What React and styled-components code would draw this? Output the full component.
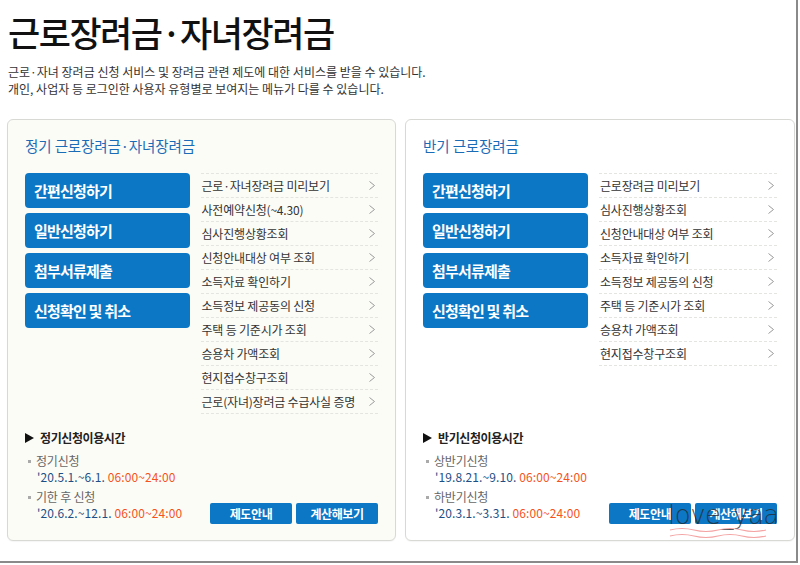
import React from 'react'
import styled, { createGlobalStyle } from 'styled-components'

const GlobalStyle = createGlobalStyle`
  body {
    margin: 0;
    background: #fff;
    font-family: "Noto Sans CJK KR", "Noto Sans", sans-serif;
    color: #333;
  }
  * { box-sizing: border-box; }
`

const Frame = styled.div`
  position: relative;
  width: 798px;
  height: 563px;
  padding: 0 4px 0 7px;
  border-right: 2px solid #8a8a8a;
  border-bottom: 2px solid #8a8a8a;
  overflow: hidden;
`

const Title = styled.h1`
  margin: 0;
  padding: 10px 0 0 1px;
  font-size: 35px;
  font-weight: 500;
  line-height: 44px;
  letter-spacing: -1.5px;
  color: #111;
`

const Desc = styled.p`
  margin: 9px 0 0 1px;
  font-size: 12px;
  line-height: 17px;
  letter-spacing: 0;
  color: #333;
`

const Panels = styled.div`
  display: flex;
  gap: 9px;
  margin-top: 22px;
`

const Panel = styled.section`
  width: ${p => p.$w}px;
  height: 422px;
  border: 1px solid #d8d8d4;
  border-radius: 6px;
  background: ${p => p.$bg};
  padding: 16px 17px 16px 17px;
  display: flex;
  flex-direction: column;
  box-shadow: 0 1px 1px rgba(0,0,0,0.04);
`

const PanelTitle = styled.h2`
  margin: 0;
  font-size: 14.5px;
  font-weight: 400;
  line-height: 20px;
  letter-spacing: -0.1px;
  color: #1b6cb6;
`

const Body = styled.div`
  display: flex;
  gap: 11px;
  margin-top: 17px;
`

const BigButtons = styled.div`
  display: flex;
  flex-direction: column;
  gap: 5px;
  width: 165px;
`

const BigButton = styled.a`
  display: flex;
  align-items: center;
  height: 35px;
  padding-left: 9px;
  border-radius: 4px;
  background: #0b77c5;
  color: #fff;
  font-size: 15px;
  font-weight: 700;
  letter-spacing: -0.8px;
`

const Menu = styled.ul`
  list-style: none;
  margin: 0;
  padding: 0;
  width: 178px;
  border-top: 1px dashed #e4e4e0;
`

const MenuItem = styled.li`
  display: flex;
  align-items: center;
  justify-content: space-between;
  height: 24px;
  padding: 0 3px 0 1px;
  border-bottom: 1px dashed #e4e4e0;
  font-size: 12px;
  letter-spacing: -0.2px;
  color: #333;
  white-space: nowrap;
`

const Chevron = () => (
  <svg width="6" height="9" viewBox="0 0 6 9">
    <polyline points="0.5,0.5 5.5,4.5 0.5,8.5" fill="none" stroke="#9a9a9a" strokeWidth="1" />
  </svg>
)

const Info = styled.div`
  margin-top: auto;
  display: flex;
  justify-content: space-between;
  align-items: flex-end;
`

const InfoText = styled.div`
  display: flex;
  flex-direction: column;
  margin-bottom: 3px;
`

const InfoHead = styled.div`
  display: flex;
  align-items: center;
  gap: 6px;
  font-size: 12px;
  font-weight: 700;
  letter-spacing: -0.4px;
  color: #222;
  margin-bottom: 7px;
`

const Tri = styled.span`
  width: 0;
  height: 0;
  border-top: 5px solid transparent;
  border-bottom: 5px solid transparent;
  border-left: 9px solid #111;
`

const Label = styled.div`
  display: flex;
  align-items: center;
  gap: 5px;
  padding-left: 3px;
  margin-top: ${p => (p.$first ? 0 : 4)}px;
  font-size: 12px;
  line-height: 16px;
  letter-spacing: -0.2px;
  color: #666;
  &::before {
    content: '';
    width: 3px;
    height: 3px;
    background: #aaa;
  }
`

const Dates = styled.div`
  padding-left: 12px;
  font-size: 12px;
  line-height: 16px;
  color: #1d4f86;
  letter-spacing: 0.1px;
`

const Time = styled.span`
  color: #f5531b;
`

const SmallButtons = styled.div`
  display: flex;
  gap: 4px;
`

const SmallButton = styled.a`
  display: flex;
  align-items: center;
  justify-content: center;
  width: 82px;
  height: 21px;
  border-radius: 2px;
  background: #0b77c5;
  color: #fff;
  font-size: 12px;
  font-weight: 700;
  letter-spacing: -0.4px;
`

const Watermark = styled.div`
  position: absolute;
  left: 668px;
  top: 500px;
  width: 100px;
  pointer-events: none;
  font-family: "DejaVu Sans", sans-serif;
  font-weight: 300;
  font-size: 26px;
  letter-spacing: -0.5px;
  color: rgba(40, 40, 40, 0.8);
`

const Wave = styled.svg`
  display: block;
  margin-top: -3px;
`

const panels = [
  {
    title: '정기 근로장려금·자녀장려금',
    w: 389,
    bg: '#fcfcf7',
    menu: [
      '근로·자녀장려금 미리보기',
      '사전예약신청(~4.30)',
      '심사진행상황조회',
      '신청안내대상 여부 조회',
      '소득자료 확인하기',
      '소득정보 제공동의 신청',
      '주택 등 기준시가 조회',
      '승용차 가액조회',
      '현지접수창구조회',
      '근로(자녀)장려금 수급사실 증명',
    ],
    head: '정기신청이용시간',
    rows: [
      ['정기신청', "'20.5.1.~6.1."],
      ['기한 후 신청', "'20.6.2.~12.1."],
    ],
  },
  {
    title: '반기 근로장려금',
    w: 390,
    bg: '#ffffff',
    menu: [
      '근로장려금 미리보기',
      '심사진행상황조회',
      '신청안내대상 여부 조회',
      '소득자료 확인하기',
      '소득정보 제공동의 신청',
      '주택 등 기준시가 조회',
      '승용차 가액조회',
      '현지접수창구조회',
    ],
    head: '반기신청이용시간',
    rows: [
      ['상반기신청', "'19.8.21.~9.10."],
      ['하반기신청', "'20.3.1.~3.31."],
    ],
  },
]

const bigButtons = ['간편신청하기', '일반신청하기', '첨부서류제출', '신청확인 및 취소']

export default function App() {
  return (
    <Frame>
      <GlobalStyle />
      <Title>근로장려금·자녀장려금</Title>
      <Desc>
        근로·자녀 장려금 신청 서비스 및 장려금 관련 제도에 대한 서비스를 받을 수 있습니다.
        <br />
        개인, 사업자 등 로그인한 사용자 유형별로 보여지는 메뉴가 다를 수 있습니다.
      </Desc>
      <Panels>
        {panels.map(p => (
          <Panel key={p.title} $w={p.w} $bg={p.bg}>
            <PanelTitle>{p.title}</PanelTitle>
            <Body>
              <BigButtons>
                {bigButtons.map(b => <BigButton key={b}>{b}</BigButton>)}
              </BigButtons>
              <Menu>
                {p.menu.map(m => (
                  <MenuItem key={m}>{m}<Chevron /></MenuItem>
                ))}
              </Menu>
            </Body>
            <Info>
              <InfoText>
                <InfoHead><Tri />{p.head}</InfoHead>
                {p.rows.map(([label, date], i) => (
                  <React.Fragment key={label}>
                    <Label $first={i === 0}>{label}</Label>
                    <Dates>{date} <Time>06:00~24:00</Time></Dates>
                  </React.Fragment>
                ))}
              </InfoText>
              <SmallButtons>
                <SmallButton>제도안내</SmallButton>
                <SmallButton>계산해보기</SmallButton>
              </SmallButtons>
            </Info>
          </Panel>
        ))}
      </Panels>
      <Watermark>
        love_yaa
        <Wave width="100" height="12" viewBox="0 0 100 12">
          <path d="M2 3 Q 14 0 26 3 T 50 3 T 74 3 T 98 3" fill="none" stroke="#f4a3a3" strokeWidth="1.2" />
          <path d="M2 9 Q 14 6 26 9 T 50 9 T 74 9 T 98 9" fill="none" stroke="#f4a3a3" strokeWidth="1.2" />
        </Wave>
      </Watermark>
    </Frame>
  )
}
